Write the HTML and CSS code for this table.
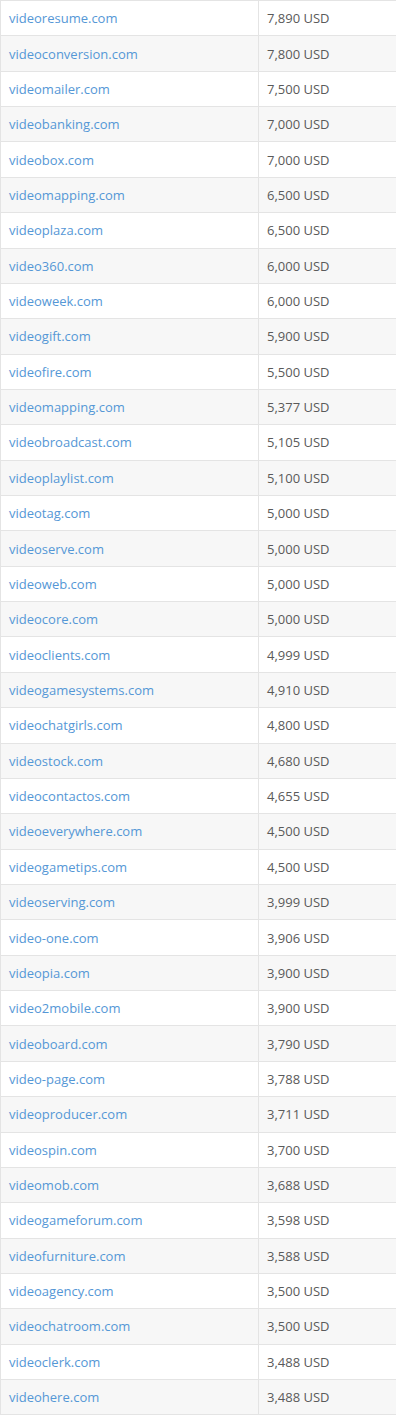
FILE: index.html
```html
<!DOCTYPE html>
<html>
<head>
<meta charset="utf-8">
<link rel="stylesheet" href="styles.css">
</head>
<body>
<table class="domains">
<tbody>
<tr><td class="name"><a href="#">videoresume.com</a></td><td class="price">7,890 USD</td></tr>
<tr><td class="name"><a href="#">videoconversion.com</a></td><td class="price">7,800 USD</td></tr>
<tr><td class="name"><a href="#">videomailer.com</a></td><td class="price">7,500 USD</td></tr>
<tr><td class="name"><a href="#">videobanking.com</a></td><td class="price">7,000 USD</td></tr>
<tr><td class="name"><a href="#">videobox.com</a></td><td class="price">7,000 USD</td></tr>
<tr><td class="name"><a href="#">videomapping.com</a></td><td class="price">6,500 USD</td></tr>
<tr><td class="name"><a href="#">videoplaza.com</a></td><td class="price">6,500 USD</td></tr>
<tr><td class="name"><a href="#">video360.com</a></td><td class="price">6,000 USD</td></tr>
<tr><td class="name"><a href="#">videoweek.com</a></td><td class="price">6,000 USD</td></tr>
<tr><td class="name"><a href="#">videogift.com</a></td><td class="price">5,900 USD</td></tr>
<tr><td class="name"><a href="#">videofire.com</a></td><td class="price">5,500 USD</td></tr>
<tr><td class="name"><a href="#">videomapping.com</a></td><td class="price">5,377 USD</td></tr>
<tr><td class="name"><a href="#">videobroadcast.com</a></td><td class="price">5,105 USD</td></tr>
<tr><td class="name"><a href="#">videoplaylist.com</a></td><td class="price">5,100 USD</td></tr>
<tr><td class="name"><a href="#">videotag.com</a></td><td class="price">5,000 USD</td></tr>
<tr><td class="name"><a href="#">videoserve.com</a></td><td class="price">5,000 USD</td></tr>
<tr><td class="name"><a href="#">videoweb.com</a></td><td class="price">5,000 USD</td></tr>
<tr><td class="name"><a href="#">videocore.com</a></td><td class="price">5,000 USD</td></tr>
<tr><td class="name"><a href="#">videoclients.com</a></td><td class="price">4,999 USD</td></tr>
<tr><td class="name"><a href="#">videogamesystems.com</a></td><td class="price">4,910 USD</td></tr>
<tr><td class="name"><a href="#">videochatgirls.com</a></td><td class="price">4,800 USD</td></tr>
<tr><td class="name"><a href="#">videostock.com</a></td><td class="price">4,680 USD</td></tr>
<tr><td class="name"><a href="#">videocontactos.com</a></td><td class="price">4,655 USD</td></tr>
<tr><td class="name"><a href="#">videoeverywhere.com</a></td><td class="price">4,500 USD</td></tr>
<tr><td class="name"><a href="#">videogametips.com</a></td><td class="price">4,500 USD</td></tr>
<tr><td class="name"><a href="#">videoserving.com</a></td><td class="price">3,999 USD</td></tr>
<tr><td class="name"><a href="#">video-one.com</a></td><td class="price">3,906 USD</td></tr>
<tr><td class="name"><a href="#">videopia.com</a></td><td class="price">3,900 USD</td></tr>
<tr><td class="name"><a href="#">video2mobile.com</a></td><td class="price">3,900 USD</td></tr>
<tr><td class="name"><a href="#">videoboard.com</a></td><td class="price">3,790 USD</td></tr>
<tr><td class="name"><a href="#">video-page.com</a></td><td class="price">3,788 USD</td></tr>
<tr><td class="name"><a href="#">videoproducer.com</a></td><td class="price">3,711 USD</td></tr>
<tr><td class="name"><a href="#">videospin.com</a></td><td class="price">3,700 USD</td></tr>
<tr><td class="name"><a href="#">videomob.com</a></td><td class="price">3,688 USD</td></tr>
<tr><td class="name"><a href="#">videogameforum.com</a></td><td class="price">3,598 USD</td></tr>
<tr><td class="name"><a href="#">videofurniture.com</a></td><td class="price">3,588 USD</td></tr>
<tr><td class="name"><a href="#">videoagency.com</a></td><td class="price">3,500 USD</td></tr>
<tr><td class="name"><a href="#">videochatroom.com</a></td><td class="price">3,500 USD</td></tr>
<tr><td class="name"><a href="#">videoclerk.com</a></td><td class="price">3,488 USD</td></tr>
<tr><td class="name"><a href="#">videohere.com</a></td><td class="price">3,488 USD</td></tr>
</tbody>
</table>
</body>
</html>
```

FILE: styles.css
```css
html, body {
  margin: 0;
  padding: 0;
  background: #ffffff;
}
body {
  font-family: "Open Sans", "Liberation Sans", Arial, sans-serif;
  font-size: 13px;
  color: #555555;
  overflow: hidden;
}
.domains {
  border-collapse: collapse;
  width: 396px;
  margin-top: 0;
}
.domains td {
  border: 1px solid #e4e4e4;
  height: 35.37px;
  padding: 0 8px;
  line-height: 18px;
  vertical-align: middle;
  box-sizing: border-box;
}
.domains td.price {
  border-right: none;
  color: #5a5a5a;
}
.domains tr:nth-child(even) td {
  background: #f7f7f7;
}
.domains td.name {
  width: 258px;
}
.domains a {
  color: #5597d6;
  text-decoration: none;
}
```
